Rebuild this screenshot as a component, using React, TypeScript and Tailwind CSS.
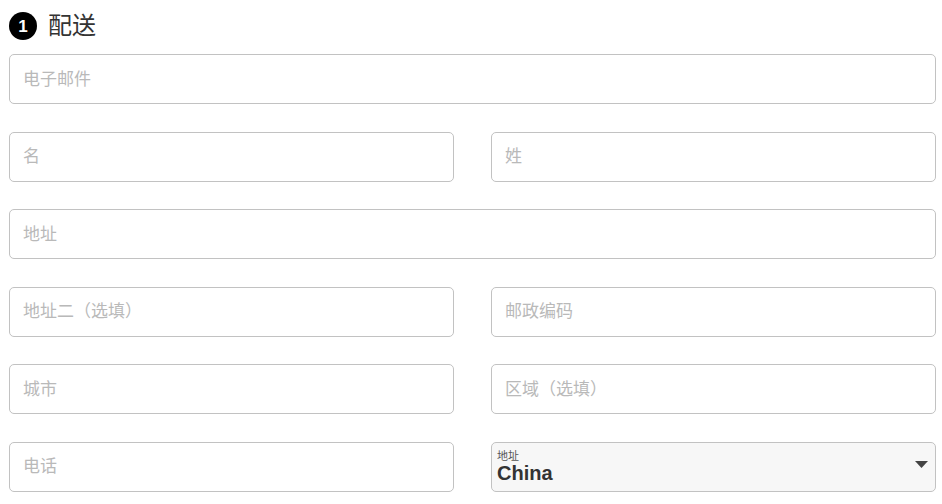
import React from "react";

const font = { fontFamily: '"Liberation Sans", "Noto Sans CJK SC", sans-serif' };

function Field({ ph }: { ph: string }) {
  return (
    <div className="h-[50px] rounded-[5px] border border-[#c2c2c2] bg-white flex items-center pl-[13px]">
      <span className="text-[17px] text-[#b9b9b9] leading-none">{ph}</span>
    </div>
  );
}

export default function App() {
  return (
    <div className="w-[942px] h-[504px] bg-white pl-[9px] pr-[6px] pt-[12px]" style={font}>
      <div className="flex items-center h-[28px] mb-[14px]">
        <div className="w-[28px] h-[28px] rounded-full bg-black text-white flex items-center justify-center text-[17px] font-bold leading-none">
          1
        </div>
        <span className="ml-[11px] text-[24px] text-[#333] leading-none">配送</span>
      </div>
      <div className="grid grid-cols-2 gap-x-[37px] gap-y-[27.6px]">
        <div className="col-span-2"><Field ph="电子邮件" /></div>
        <Field ph="名" />
        <Field ph="姓" />
        <div className="col-span-2"><Field ph="地址" /></div>
        <Field ph="地址二（选填）" />
        <Field ph="邮政编码" />
        <Field ph="城市" />
        <Field ph="区域（选填）" />
        <Field ph="电话" />
        <div className="h-[50px] rounded-[5px] border border-[#c2c2c2] bg-[#f7f7f7] flex items-center pl-[5px] pr-[7px]">
          <div className="flex-1 flex flex-col">
            <span className="text-[11px] text-[#555] leading-none mt-[1px]">地址</span>
            <span className="text-[20px] font-bold text-[#333] leading-none mt-[1px]">China</span>
          </div>
          <svg width="13" height="7" viewBox="0 0 13 7" className="mb-[4px]">
            <polygon points="0,0 13,0 6.5,7" fill="#444" />
          </svg>
        </div>
      </div>
    </div>
  );
}
